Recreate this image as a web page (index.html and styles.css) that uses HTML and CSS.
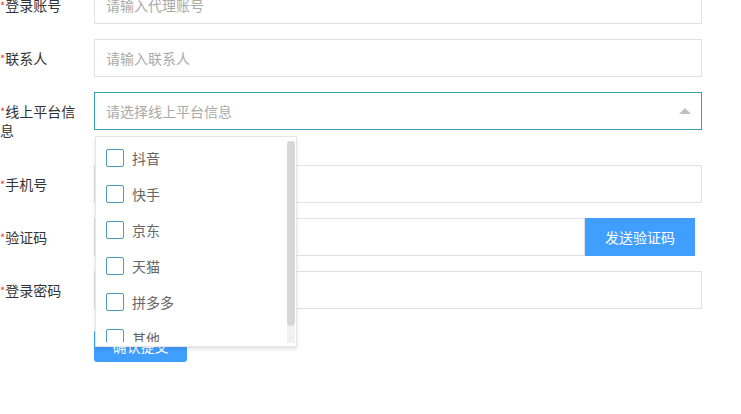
FILE: index.html
```html
<!DOCTYPE html>
<html lang="zh-CN">
  <head>
    <meta charset="UTF-8" />
    <title>代理注册</title>
    <link rel="stylesheet" href="styles.css">
  </head>
  <body>
    <form class="form">
      <div class="row">
        <label class="label"><span class="req">*</span>登录账号</label>
        <input class="field" type="text" placeholder="请输入代理账号" />
      </div>
      <div class="row">
        <label class="label"><span class="req">*</span>联系人</label>
        <input class="field" type="text" placeholder="请输入联系人" />
      </div>
      <div class="row row-tall">
        <label class="label label-wrap"><span class="req">*</span>线上平台信息</label>
        <div class="select">
          <input class="field field-focus" type="text" placeholder="请选择线上平台信息" readonly />
          <span class="arrow"></span>
          <div class="dropdown">
            <div class="viewport">
              <ul class="options">
                <li class="option"><span class="box"></span>抖音</li>
                <li class="option"><span class="box"></span>快手</li>
                <li class="option"><span class="box"></span>京东</li>
                <li class="option"><span class="box"></span>天猫</li>
                <li class="option"><span class="box"></span>拼多多</li>
                <li class="option"><span class="box"></span>其他</li>
              </ul>
            </div>
            <div class="scrollbar"><div class="thumb"></div></div>
          </div>
        </div>
      </div>
      <div class="row">
        <label class="label"><span class="req">*</span>手机号</label>
        <input class="field" type="text" />
      </div>
      <div class="row">
        <label class="label"><span class="req">*</span>验证码</label>
        <div class="code">
          <input class="field field-code" type="text" />
          <button type="button" class="btn btn-code">发送验证码</button>
        </div>
      </div>
      <div class="row">
        <label class="label"><span class="req">*</span>登录密码</label>
        <input class="field" type="password" />
      </div>
      <div class="actions">
        <button type="button" class="btn btn-submit">确认提交</button>
      </div>
    </form>
  </body>
</html>
```

FILE: styles.css
```css
html,
body {
  margin: 0;
  background: #fff;
}

body,
input,
button {
  font: 14px "Noto Sans CJK SC", "Liberation Sans", sans-serif;
}

.form {
  width: 702px;
  margin-top: -14px;
}

.row {
  display: flex;
  align-items: flex-start;
  margin-bottom: 15px;
}

.row-tall {
  margin-bottom: 25px;
}

.label {
  width: 82px;
  padding-right: 12px;
  flex-shrink: 0;
  color: #333;
  line-height: 38px;
}

.label-wrap {
  line-height: 19px;
  padding-top: 10px;
}

.req {
  color: #e0453a;
  font-size: 11px;
  vertical-align: top;
}

.field {
  box-sizing: border-box;
  width: 608px;
  height: 38px;
  border: 1px solid #e2e2e2;
  padding: 0 11px;
  color: #333;
  outline: none;
  background: #fff;
}

.field::placeholder {
  color: #aaa;
}

.field-focus {
  border-color: #3aa0ab;
}

.select {
  position: relative;
}

.arrow {
  position: absolute;
  right: 11px;
  top: 16px;
  border: 6px solid transparent;
  border-top: none;
  border-bottom: 6px solid #c2c2c2;
}

.dropdown {
  position: absolute;
  left: 1px;
  top: 44px;
  width: 202px;
  height: 211px;
  background: #fff;
  border: 1px solid #e6e6e6;
  box-sizing: border-box;
  box-shadow: 0 2px 4px rgba(0, 0, 0, 0.12);
  z-index: 10;
}

.viewport {
  height: 205px;
  overflow: hidden;
}

.options {
  list-style: none;
  margin: 0;
  padding: 3px 0 0;
}

.option {
  display: flex;
  align-items: center;
  height: 36px;
  padding-left: 10px;
  color: #666;
}

.box {
  box-sizing: border-box;
  width: 18px;
  height: 18px;
  border: 1px solid #4a9fb8;
  border-radius: 2px;
  margin-right: 8px;
}

.scrollbar {
  position: absolute;
  right: 1px;
  top: 4px;
  width: 8px;
  height: 202px;
  background: #f1f1f1;
}

.thumb {
  height: 185px;
  background: #d6d6d6;
  border-radius: 4px;
}

.code {
  display: flex;
}

.field-code {
  width: 491px;
}

.btn {
  border: none;
  color: #fff;
  background: #409eff;
  cursor: pointer;
}

.btn-code {
  width: 110px;
  height: 38px;
}

.actions {
  padding-left: 94px;
  margin-top: 21px;
}

.btn-submit {
  width: 93px;
  height: 32px;
  border-radius: 3px;
}
```
